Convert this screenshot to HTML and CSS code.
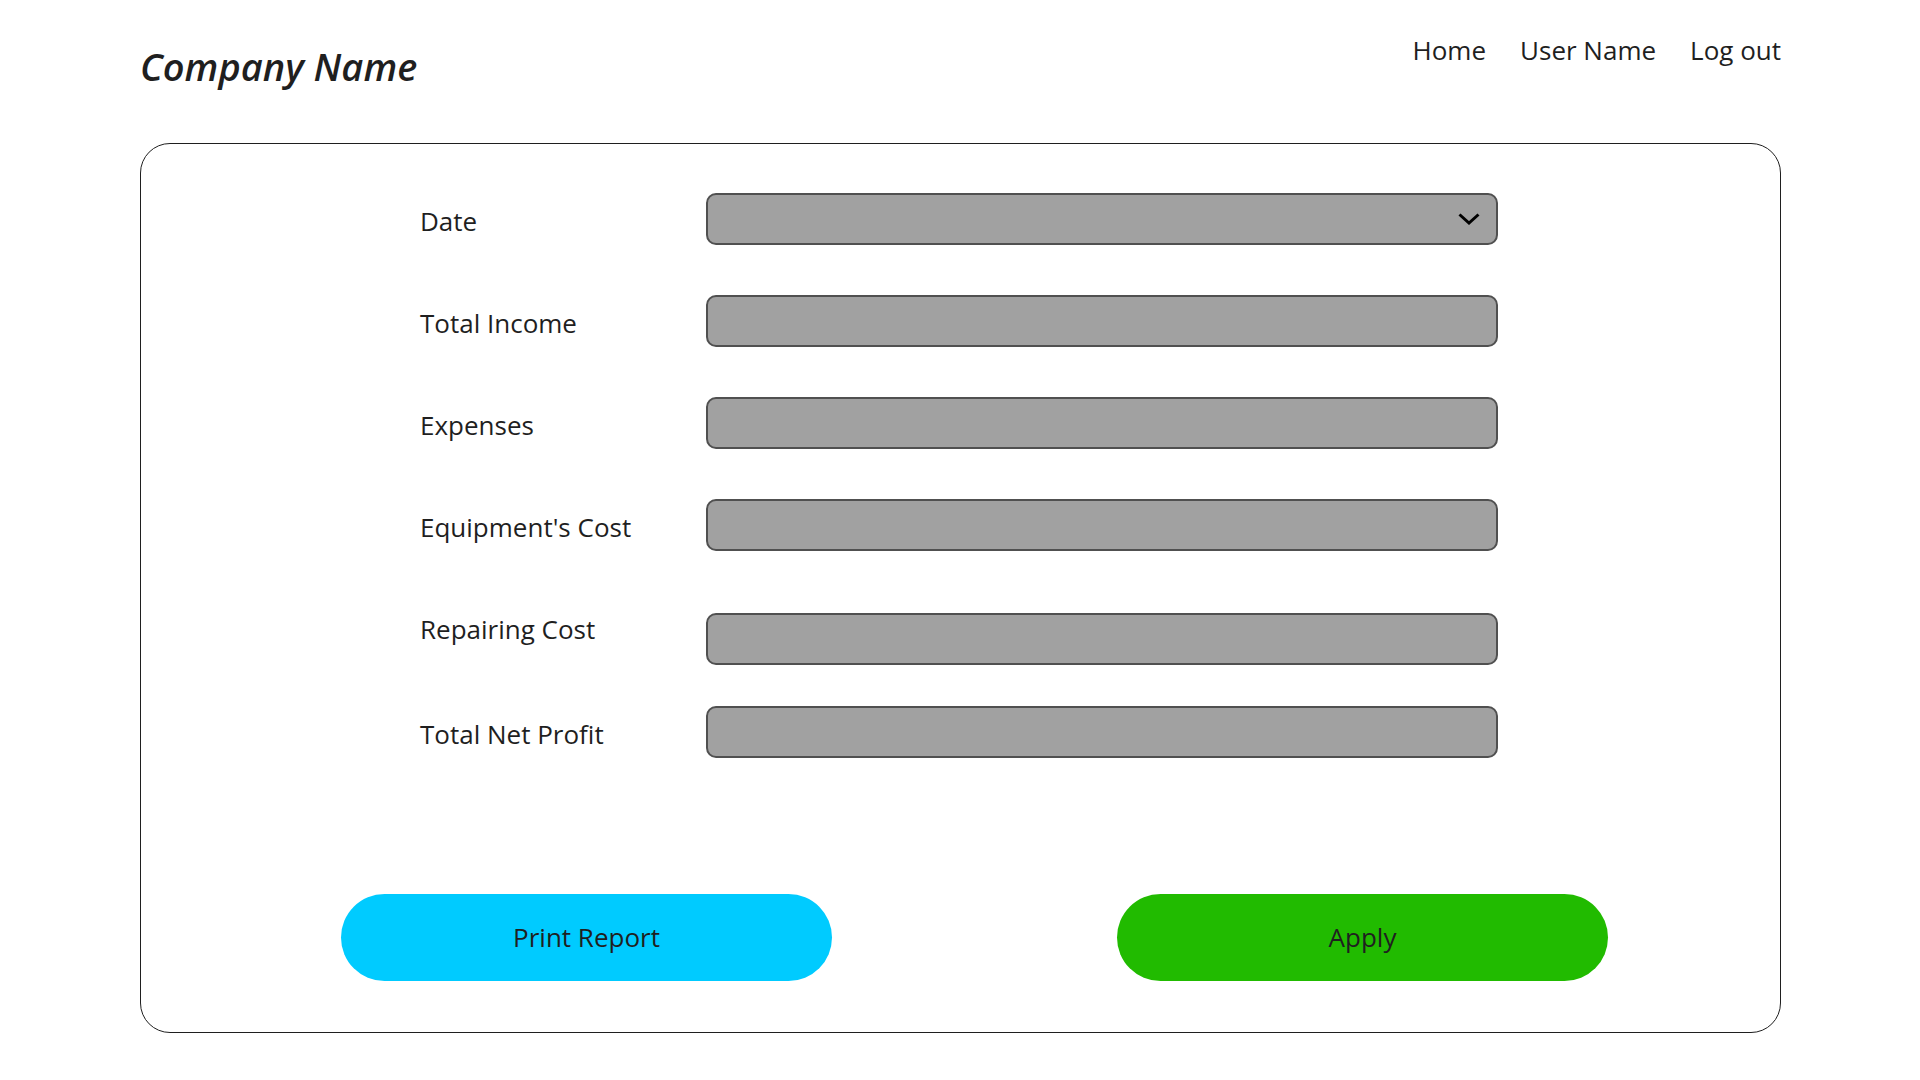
FILE: index.html
```html
<!DOCTYPE html>
<html lang="en">
<head>
<meta charset="utf-8">
<meta name="viewport" content="width=device-width, initial-scale=1">
<title>Company Name</title>
<link rel="stylesheet" href="styles.css">
</head>
<body>
<header class="header">
  <a class="brand" href="#">Company Name</a>
  <nav class="nav">
    <a href="#">Home</a>
    <a href="#">User Name</a>
    <a href="#">Log out</a>
  </nav>
</header>
<main>
  <form class="card">
    <div class="row">
      <label for="date">Date</label>
      <div class="select">
        <select class="field" id="date"><option value=""></option></select>
        <svg class="chevron" viewBox="0 0 22 12" aria-hidden="true"><path d="M1.5 1.5 11 10 20.500 1.500"/></svg>
      </div>
    </div>
    <div class="row">
      <label for="income">Total Income</label>
      <input class="field" id="income" type="text">
    </div>
    <div class="row">
      <label for="expenses">Expenses</label>
      <input class="field" id="expenses" type="text">
    </div>
    <div class="row">
      <label for="equipment">Equipment's Cost</label>
      <input class="field" id="equipment" type="text">
    </div>
    <div class="row row-repairing">
      <label for="repairing">Repairing Cost</label>
      <input class="field" id="repairing" type="text">
    </div>
    <div class="row">
      <label for="profit">Total Net Profit</label>
      <input class="field" id="profit" type="text">
    </div>
    <div class="actions">
      <button class="button button-print" type="button">Print Report</button>
      <button class="button button-apply" type="submit">Apply</button>
    </div>
  </form>
</main>
</body>
</html>
```

FILE: styles.css
```css
* { box-sizing: border-box; }

body {
  margin: 0;
  padding: 32px 139px 47px 140px;
  background: #fff;
  color: #1f1f1f;
  font-family: "Segoe UI", "Open Sans", sans-serif;
  font-size: 26px;
  line-height: 36px;
}

a { color: inherit; text-decoration: none; }

.header {
  display: flex;
  justify-content: space-between;
  align-items: flex-start;
  padding-bottom: 51px;
}

.brand {
  padding-top: 8px;
  font-family: "Segoe Print", "Open Sans", sans-serif;
  font-size: 38px;
  font-style: italic;
  font-weight: 600;
  line-height: 52px;
}

.nav { display: flex; gap: 34px; }

.card {
  padding: 49px 0 51px;
  border: 1px solid #1f1f1f;
  border-radius: 30px;
}

.row {
  display: grid;
  grid-template-columns: 286px 1fr;
  align-items: start;
  padding: 0 282px 50px 279px;
}

.row label { padding-top: 10px; }

.row-repairing { padding-bottom: 41px; }
.row-repairing .field { margin-top: 12px; }

.field {
  display: block;
  width: 100%;
  height: 52px;
  padding: 0 16px;
  border: 2px solid #505050;
  border-radius: 10px;
  background: #a1a1a1;
  color: inherit;
  font: inherit;
  appearance: none;
}

.select { position: relative; }

.chevron {
  position: absolute;
  top: 20px;
  right: 18px;
  width: 22px;
  height: 12px;
  fill: none;
  stroke: #000;
  stroke-width: 3;
  pointer-events: none;
}

.actions {
  display: grid;
  grid-template-columns: 1fr 1fr;
  gap: 285px;
  padding: 86px 172px 0 200px;
}

.button {
  height: 87px;
  padding: 0 0 2px;
  border: 0;
  border-radius: 44px;
  color: inherit;
  font: inherit;
}

.button-print { background: #00cbff; }
.button-apply { background: #21bb00; }
```
